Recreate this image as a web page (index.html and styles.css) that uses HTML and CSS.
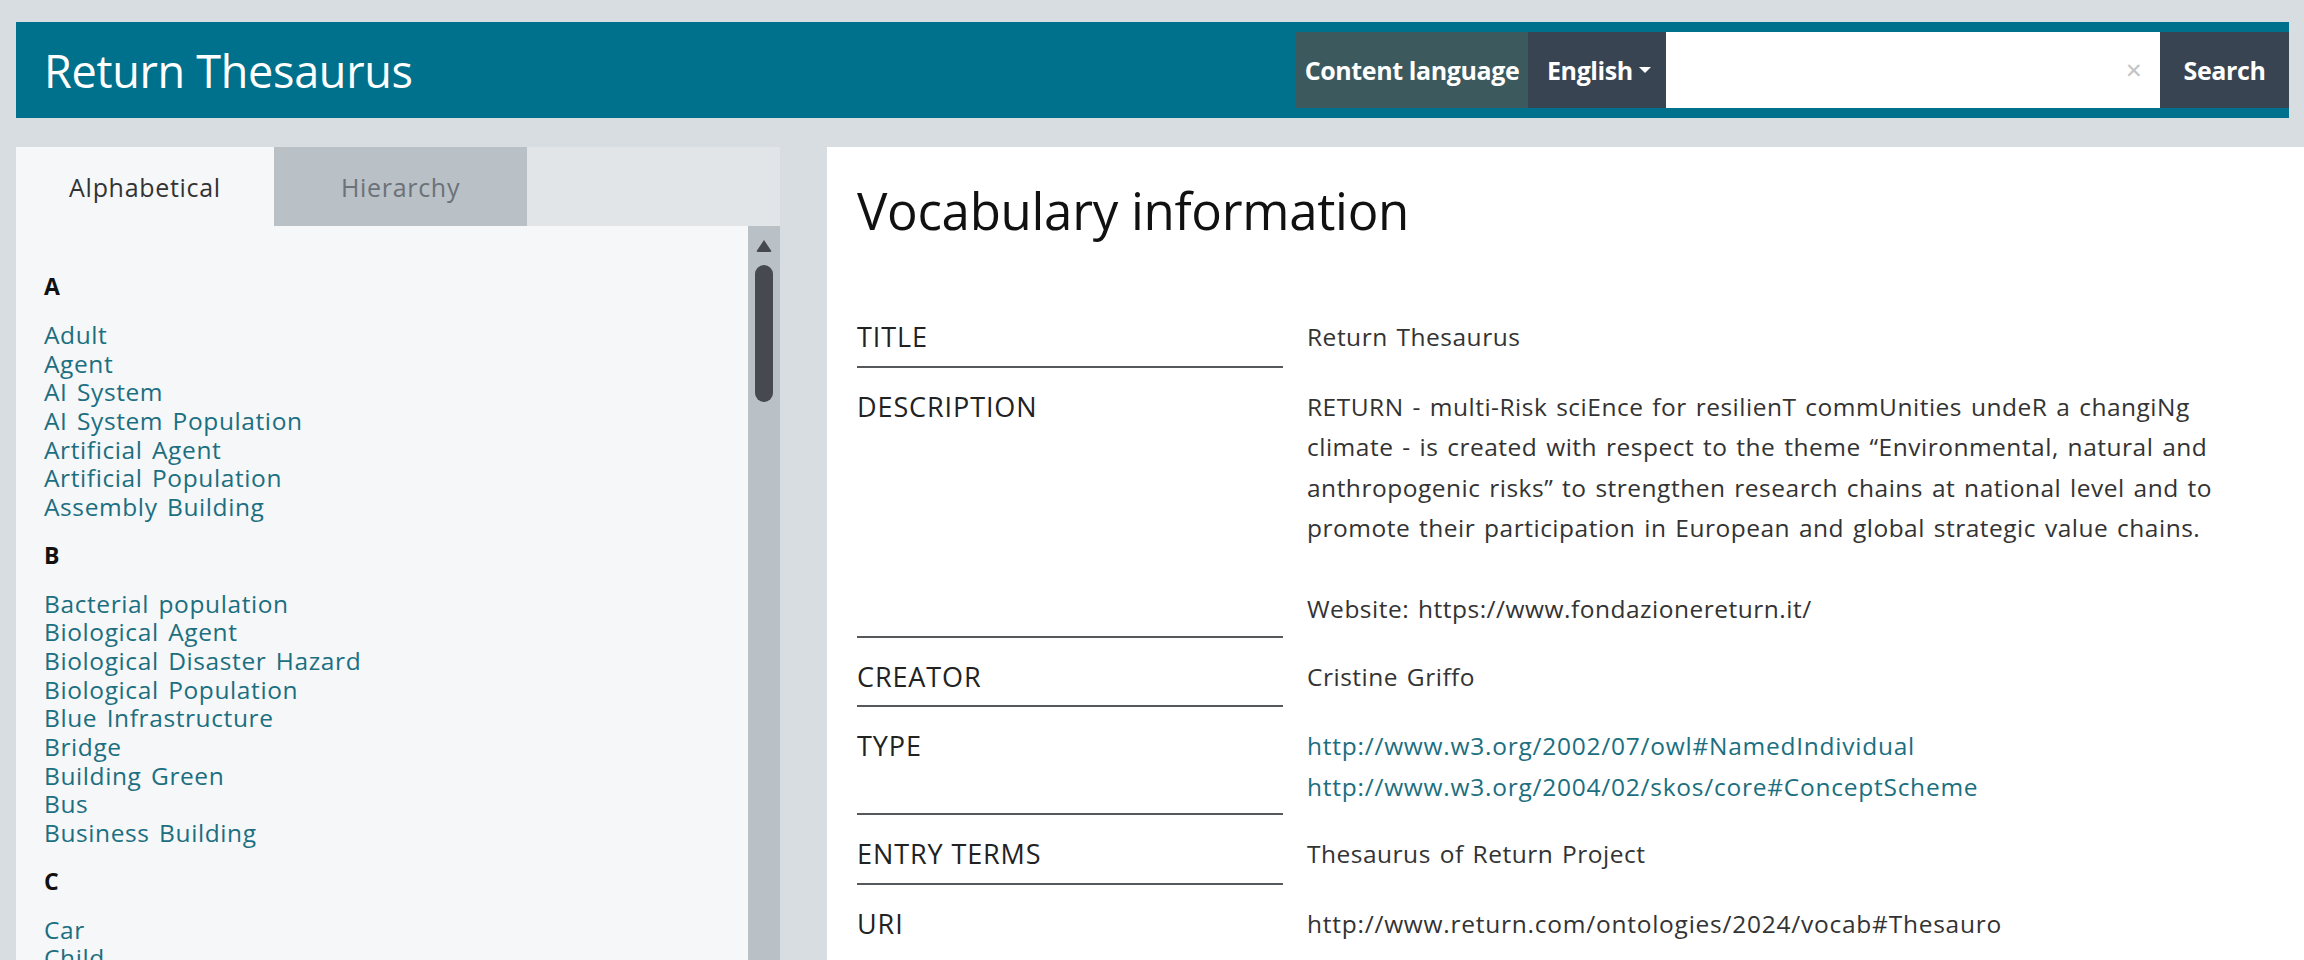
FILE: index.html
```html
<!DOCTYPE html>
<html lang="en">
<head>
<meta charset="utf-8">
<title>Return Thesaurus</title>
<link rel="stylesheet" href="styles.css">
</head>
<body>
<header class="topbar">
  <a class="brand" href="#">Return Thesaurus</a>
  <div class="lang-label">Content language</div>
  <div class="lang-select">English <span class="caret"></span></div>
  <div class="search-box"><span class="clear">&#x2715;</span></div>
  <button class="search-btn">Search</button>
</header>

<div class="layout">
  <aside class="sidebar">
    <nav class="tabs">
      <a class="tab active" href="#">Alphabetical</a>
      <a class="tab" href="#">Hierarchy</a>
    </nav>
    <div class="list-wrap">
      <div class="list">
        <h3 class="letter">A</h3>
        <ul class="terms">
          <li><a href="#">Adult</a></li>
          <li><a href="#">Agent</a></li>
          <li><a href="#">AI System</a></li>
          <li><a href="#">AI System Population</a></li>
          <li><a href="#">Artificial Agent</a></li>
          <li><a href="#">Artificial Population</a></li>
          <li><a href="#">Assembly Building</a></li>
        </ul>
        <h3 class="letter">B</h3>
        <ul class="terms">
          <li><a href="#">Bacterial population</a></li>
          <li><a href="#">Biological Agent</a></li>
          <li><a href="#">Biological Disaster Hazard</a></li>
          <li><a href="#">Biological Population</a></li>
          <li><a href="#">Blue Infrastructure</a></li>
          <li><a href="#">Bridge</a></li>
          <li><a href="#">Building Green</a></li>
          <li><a href="#">Bus</a></li>
          <li><a href="#">Business Building</a></li>
        </ul>
        <h3 class="letter">C</h3>
        <ul class="terms">
          <li><a href="#">Car</a></li>
          <li><a href="#">Child</a></li>
          <li><a href="#">Citizen</a></li>
          <li><a href="#">Community</a></li>
        </ul>
      </div>
      <div class="scrollbar">
        <span class="arrow"></span>
        <span class="thumb"></span>
      </div>
    </div>
  </aside>

  <main class="content">
    <h1 class="page-title">Vocabulary information</h1>
    <div class="props">
      <div class="label">TITLE</div>
      <div class="value">Return Thesaurus</div>

      <div class="label">DESCRIPTION</div>
      <div class="value">
        <p>RETURN - multi-Risk sciEnce for resilienT commUnities undeR a changiNg<br>climate - is created with respect to the theme “Environmental, natural and<br>anthropogenic risks” to strengthen research chains at national level and to<br>promote their participation in European and global strategic value chains.</p>
        <p class="gap">Website: https://www.fondazionereturn.it/</p>
      </div>

      <div class="label">CREATOR</div>
      <div class="value">Cristine Griffo</div>

      <div class="label">TYPE</div>
      <div class="value">
        <a href="#">http://www.w3.org/2002/07/owl#NamedIndividual</a><br>
        <a href="#">http://www.w3.org/2004/02/skos/core#ConceptScheme</a>
      </div>

      <div class="label">ENTRY TERMS</div>
      <div class="value">Thesaurus of Return Project</div>

      <div class="label last">URI</div>
      <div class="value uri">http://www.return.com/ontologies/2024/vocab#Thesauro</div>
    </div>
  </main>
</div>
</body>
</html>
```

FILE: styles.css
```css
* { box-sizing: border-box; }

html, body {
  margin: 0;
  height: 960px;
  overflow: hidden;
}

body {
  background: #d8dde1;
  font-family: "Open Sans", "Noto Sans", sans-serif;
  color: #333;
}

a { text-decoration: none; }

/* ---------- header ---------- */
.topbar {
  display: flex;
  align-items: center;
  margin: 22px 15px 0 16px;
  height: 96px;
  padding: 10px 0 10px 28px;
  background: #00718c;
}

.brand {
  margin-right: auto;
  color: #fff;
  font-size: 45px;
  line-height: 1;
  letter-spacing: -0.3px;
}

.lang-label,
.lang-select,
.search-box,
.search-btn {
  height: 76px;
  display: flex;
  align-items: center;
}

.lang-label {
  width: 232px;
  justify-content: center;
  background: #3c595d;
  color: #fff;
  font-weight: 700;
  font-size: 25px;
  letter-spacing: -0.4px;
}

.lang-select {
  width: 138px;
  padding-left: 19px;
  background: #394452;
  color: #fff;
  font-weight: 700;
  font-size: 25px;
  letter-spacing: -0.4px;
}

.caret {
  margin-left: 6px;
  width: 0;
  height: 0;
  border-left: 6px solid transparent;
  border-right: 6px solid transparent;
  border-top: 6px solid #fff;
}

.search-box {
  width: 494px;
  justify-content: flex-end;
  padding-right: 17px;
  background: #fff;
}

.clear {
  color: #c4c4c4;
  font-size: 21px;
}

.search-btn {
  width: 129px;
  justify-content: center;
  border: 0;
  padding: 0;
  background: #394452;
  color: #fff;
  font-family: inherit;
  font-weight: 700;
  font-size: 25px;
  letter-spacing: -0.4px;
}

/* ---------- layout ---------- */
.layout {
  display: flex;
  gap: 47px;
  margin: 29px 16px 0 16px;
  height: 813px;
}

/* ---------- sidebar ---------- */
.sidebar {
  width: 764px;
  flex: none;
  display: flex;
  flex-direction: column;
}

.tabs {
  display: flex;
  height: 79px;
  background: #e1e5e8;
}

.tab {
  display: flex;
  align-items: center;
  justify-content: center;
  font-size: 25px;
  letter-spacing: 0.7px;
  padding-top: 1px;
}

.tab:first-child { width: 258px; }
.tab:nth-child(2) { width: 253px; }

.tab.active {
  background: #f6f7f9;
  color: #333;
}

.tab:not(.active) {
  background: #b9c0c6;
  color: #6b7279;
}

.list-wrap {
  flex: 1;
  display: flex;
  background: #f6f7f9;
  overflow: hidden;
}

.list {
  flex: 1;
  padding: 27px 0 0 28px;
}

.letter {
  margin: 19px 0 20px;
  font-size: 23px;
  line-height: 28.8px;
  font-weight: 700;
  color: #111;
}

.terms {
  list-style: none;
  margin: 0;
  padding: 0;
}

.terms li {
  font-size: 24.5px;
  line-height: 28.7px;
  letter-spacing: 0.6px;
  word-spacing: 2.5px;
}

.terms a { color: #1b6f80; }

.scrollbar {
  width: 32px;
  flex: none;
  background: #b9c0c6;
  display: flex;
  flex-direction: column;
  align-items: center;
  padding-top: 14px;
}

.arrow {
  width: 0;
  height: 0;
  border-left: 8px solid transparent;
  border-right: 8px solid transparent;
  border-bottom: 12px solid #45494e;
  border-radius: 2px;
}

.thumb {
  margin-top: 13px;
  width: 18px;
  height: 137px;
  border-radius: 9px;
  background: #46494f;
}

/* ---------- content ---------- */
.content {
  flex: 1;
  background: #fff;
  padding: 32px 30px 0 30px;
}

.page-title {
  margin: 0 0 57px;
  font-size: 51px;
  line-height: 62px;
  font-weight: 400;
  color: #111;
  letter-spacing: -0.3px;
}

.props {
  display: grid;
  grid-template-columns: 426px 1000px;
  column-gap: 24px;
}

.label,
.value {
  padding: 19px 0 8px;
  line-height: 40.5px;
}

.label {
  font-size: 27px;
  color: #222;
  letter-spacing: 0.9px;
  border-bottom: 2px solid #55595c;
}

.label.last {
  border-bottom-color: transparent;
}

.value {
  font-size: 24.5px;
  color: #333;
  letter-spacing: 0.5px;
  word-spacing: 2px;
  white-space: nowrap;
}

.value p { margin: 0; }
.value p.gap { margin-top: 40.5px; }

.value a { color: #1b6f80; }

.value a,
.value.uri {
  letter-spacing: 0.75px;
}
```
